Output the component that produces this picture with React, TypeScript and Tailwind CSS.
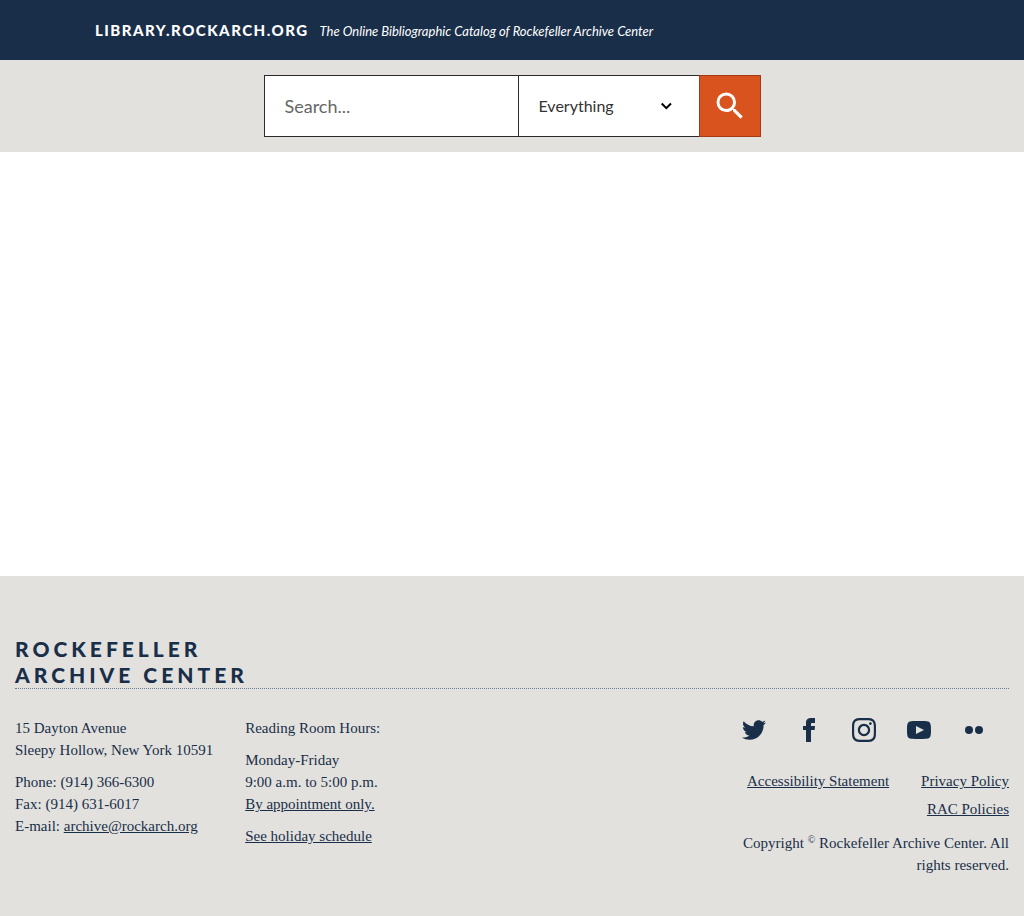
import React from 'react';

const socials = [
  {
    label: 'Twitter',
    path: 'M24 4.557c-.883.392-1.832.656-2.828.775 1.017-.609 1.798-1.574 2.165-2.724-.951.564-2.005.974-3.127 1.195-.897-.957-2.178-1.555-3.594-1.555-3.179 0-5.515 2.966-4.797 6.045-4.091-.205-7.719-2.165-10.148-5.144-1.29 2.213-.669 5.108 1.523 6.574-.806-.026-1.566-.247-2.229-.616-.054 2.281 1.581 4.415 3.949 4.89-.693.188-1.452.232-2.224.084.626 1.956 2.444 3.379 4.6 3.419-2.07 1.623-4.678 2.348-7.29 2.04 2.179 1.397 4.768 2.212 7.548 2.212 9.142 0 14.307-7.721 13.995-14.646.962-.695 1.797-1.562 2.457-2.549z',
  },
  {
    label: 'Facebook',
    path: 'M9 8H6v4h3v12h5V12h3.642L18 8h-4V6.333C14 5.378 14.192 5 15.115 5H18V0h-3.808C10.596 0 9 1.583 9 4.615V8z',
  },
  {
    label: 'Instagram',
    path: 'M12 2.163c3.204 0 3.584.012 4.85.07 3.252.148 4.771 1.691 4.919 4.919.058 1.265.069 1.645.069 4.849 0 3.205-.012 3.584-.069 4.849-.149 3.225-1.664 4.771-4.919 4.919-1.266.058-1.644.07-4.85.07-3.204 0-3.584-.012-4.849-.07-3.26-.149-4.771-1.699-4.919-4.92-.058-1.265-.07-1.644-.07-4.849 0-3.204.013-3.583.07-4.849.149-3.227 1.664-4.771 4.919-4.919 1.266-.057 1.645-.069 4.849-.069zm0-2.163c-3.259 0-3.667.014-4.947.072-4.358.2-6.78 2.618-6.98 6.98-.059 1.281-.073 1.689-.073 4.948 0 3.259.014 3.668.072 4.948.2 4.358 2.618 6.78 6.98 6.98 1.281.058 1.689.072 4.948.072 3.259 0 3.668-.014 4.948-.072 4.354-.2 6.782-2.618 6.979-6.98.059-1.28.073-1.689.073-4.948 0-3.259-.014-3.667-.072-4.947-.196-4.354-2.617-6.78-6.979-6.98-1.281-.059-1.69-.073-4.949-.073zm0 5.838c-3.403 0-6.162 2.759-6.162 6.162s2.759 6.163 6.162 6.163 6.162-2.759 6.162-6.163c0-3.403-2.759-6.162-6.162-6.162zm0 10.162c-2.209 0-4-1.79-4-4 0-2.209 1.791-4 4-4s4 1.791 4 4c0 2.21-1.791 4-4 4zm6.406-11.845c-.796 0-1.441.645-1.441 1.44s.645 1.44 1.441 1.44c.795 0 1.439-.645 1.439-1.44s-.644-1.44-1.439-1.44z',
  },
  {
    label: 'YouTube',
    path: 'M19.615 3.184c-3.604-.246-11.631-.245-15.23 0-3.897.266-4.356 2.62-4.385 8.816.029 6.185.484 8.549 4.385 8.816 3.6.245 11.626.246 15.23 0 3.897-.266 4.356-2.62 4.385-8.816-.029-6.185-.484-8.549-4.385-8.816zm-10.615 12.816v-8l8 3.993-8 4.007z',
  },
  {
    label: 'Flickr',
    path: 'M11 12a4 4 0 1 1-8 0 4 4 0 0 1 8 0zM21 12a4 4 0 1 1-8 0 4 4 0 0 1 8 0z',
  },
];

function Header() {
  return (
    <header className="flex h-[60px] items-baseline gap-[11px] bg-[#192e49] px-[95px] pt-[18px] font-[Lato,sans-serif] text-white">
      <a href="#home" className="font-['Lato_Black',Lato,sans-serif] text-[15px] leading-6 font-black tracking-[1.5px]">
        LIBRARY.ROCKARCH.ORG
      </a>
      <p className="text-[13px] italic">The Online Bibliographic Catalog of Rockefeller Archive Center</p>
    </header>
  );
}

function SearchBar() {
  return (
    <form
      role="search"
      onSubmit={(e) => e.preventDefault()}
      className="flex justify-center bg-[#e2e1dd] py-[15px] font-[Lato,sans-serif] text-[#333]"
    >
      <input
        type="search"
        aria-label="Search"
        placeholder="Search..."
        className="h-[62px] w-[254px] appearance-none border border-r-0 border-[#2b2b2e] bg-white px-5 text-lg placeholder:text-[#666]"
      />
      <div className="relative">
        <select
          aria-label="Material type"
          className="h-[62px] w-[181px] appearance-none border border-r-0 border-[#2b2b2e] bg-white pr-10 pl-5 text-base"
        >
          <option>Everything</option>
          <option>Books</option>
          <option>Journals</option>
        </select>
        <svg
          viewBox="0 0 12 8"
          className="pointer-events-none absolute top-[27px] right-[27px] h-2 w-3"
          fill="none"
          stroke="#000"
          strokeWidth="2"
          aria-hidden="true"
        >
          <path d="M1.7 1.5 6.3 6.2l4.7-4.7" />
        </svg>
      </div>
      <button
        type="submit"
        aria-label="Submit search"
        className="flex size-[62px] items-center justify-center border border-[#a43a11] bg-[#d9531e]"
      >
        <svg viewBox="0 0 24 24" className="size-9" fill="#fff" aria-hidden="true">
          <path d="M15.5 14h-.79l-.28-.27A6.471 6.471 0 0 0 16 9.5 6.5 6.5 0 1 0 9.5 16c1.61 0 3.09-.59 4.23-1.57l.27.28v.79l5 4.99L20.49 19l-4.99-5zm-6 0C7.01 14 5 11.99 5 9.5S7.01 5 9.5 5 14 7.01 14 9.5 11.99 14 9.5 14z" />
        </svg>
      </button>
    </form>
  );
}

function Footer() {
  return (
    <footer className="bg-[#e2e1dd] px-[15px] pt-[60px] pb-10 font-['Liberation_Serif',serif] text-[15px] leading-[22px] text-[#192e49]">
      <h2 className="border-b border-dotted border-[#6b7a96] font-['Lato_Black',Lato,sans-serif] text-[21px] leading-[26px] font-black tracking-[4px]">
        ROCKEFELLER
        <br />
        ARCHIVE CENTER
      </h2>
      <div className="flex items-start justify-between pt-7">
        <div className="flex gap-8">
          <address className="flex flex-col gap-[10px] not-italic">
            <p>
              15 Dayton Avenue
              <br />
              Sleepy Hollow, New York 10591
            </p>
            <p>
              Phone: (914) 366-6300
              <br />
              Fax: (914) 631-6017
              <br />
              E-mail:{' '}
              <a href="mailto:archive@rockarch.org" className="underline">
                archive@rockarch.org
              </a>
            </p>
          </address>
          <div className="flex flex-col gap-[10px]">
            <p>Reading Room Hours:</p>
            <p>
              Monday-Friday
              <br />
              9:00 a.m. to 5:00 p.m.
              <br />
              <a href="#appointment" className="underline">
                By appointment only.
              </a>
            </p>
            <p>
              <a href="#holidays" className="underline">
                See holiday schedule
              </a>
            </p>
          </div>
        </div>
        <div className="flex w-[282px] flex-col items-end text-right">
          <ul className="flex gap-[31px] pr-[23px]">
            {socials.map((s) => (
              <li key={s.label}>
                <a href={'#' + s.label.toLowerCase()} aria-label={s.label}>
                  <svg viewBox="0 0 24 24" className="mt-px size-6" fill="currentColor" aria-hidden="true">
                    <path d={s.path} />
                  </svg>
                </a>
              </li>
            ))}
          </ul>
          <nav aria-label="Policies" className="flex flex-wrap justify-end gap-x-8 gap-y-[6px] pt-7">
            <a href="#accessibility" className="underline">Accessibility Statement</a>
            <a href="#privacy" className="underline">Privacy Policy</a>
            <a href="#policies" className="underline">RAC Policies</a>
          </nav>
          <p className="pt-3">
            Copyright <sup className="text-[10px]">©</sup> Rockefeller Archive Center. All rights reserved.
          </p>
        </div>
      </div>
    </footer>
  );
}

export default function App() {
  return (
    <div className="flex min-h-screen flex-col bg-white">
      <Header />
      <SearchBar />
      <main className="flex-1" />
      <Footer />
    </div>
  );
}
